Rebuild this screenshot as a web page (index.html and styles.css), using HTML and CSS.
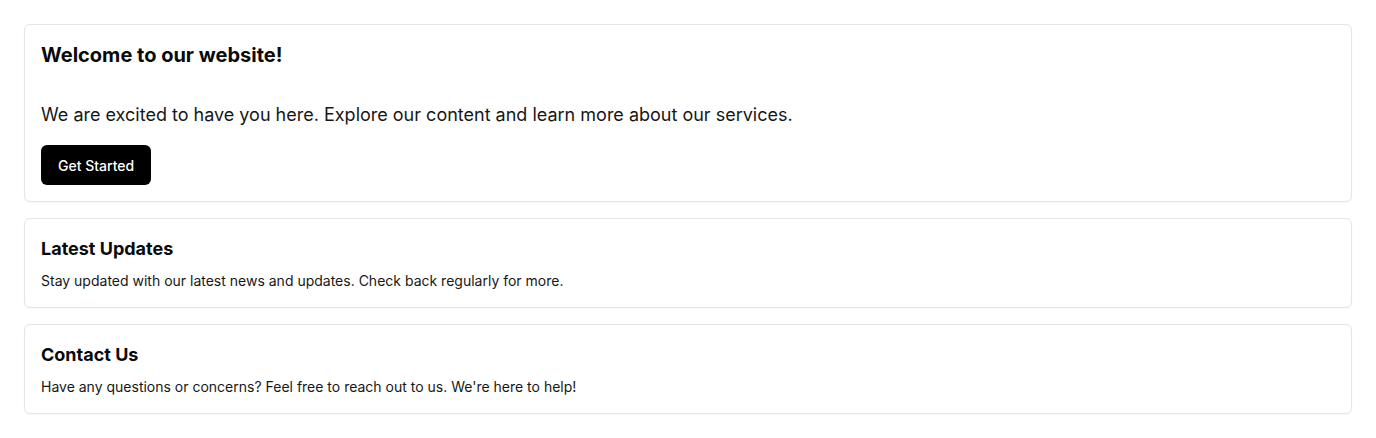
FILE: index.html
```html
<!DOCTYPE html>
<html lang="en">
<head>
<meta charset="utf-8">
<title>Welcome</title>
<link rel="stylesheet" href="styles.css">
</head>
<body>
<main class="page">
  <section class="card">
    <h1 class="card-title-lg">Welcome to our website!</h1>
    <p class="lead">We are excited to have you here. Explore our content and learn more about our services.</p>
    <button class="btn">Get Started</button>
  </section>
  <section class="card">
    <h2 class="card-title">Latest Updates</h2>
    <p class="text">Stay updated with our latest news and updates. Check back regularly for more.</p>
  </section>
  <section class="card">
    <h2 class="card-title">Contact Us</h2>
    <p class="text">Have any questions or concerns? Feel free to reach out to us. We're here to help!</p>
  </section>
</main>
</body>
</html>
```

FILE: styles.css
```css
* { box-sizing: border-box; }
html, body { margin: 0; padding: 0; background: #ffffff; }
body {
  font-family: Inter, "Noto Sans", sans-serif;
  color: #0a0a0a;
}
.page {
  padding: 24px;
  display: flex;
  flex-direction: column;
  gap: 16px;
}
.card {
  border: 1px solid #e5e5e5;
  border-radius: 6px;
  padding: 16px;
  background: #fff;
  box-shadow: 0 1px 2px rgba(0,0,0,0.04);
}
.card-title-lg {
  margin: 0 0 32px;
  font-size: 20px;
  line-height: 28px;
  font-weight: 700;
}
.lead {
  margin: 0 0 16px;
  font-size: 18px;
  line-height: 28px;
  color: #171717;
}
.btn {
  display: block;
  height: 40px;
  padding: 0 17px;
  border: 0;
  border-radius: 6px;
  background: #000;
  color: #fff;
  font-family: Inter, "Noto Sans", sans-serif;
  font-size: 14px;
  font-weight: 500;
}
.card-title {
  margin: 0 0 8px;
  font-size: 18px;
  line-height: 28px;
  font-weight: 700;
}
.text {
  margin: 0;
  font-size: 14px;
  line-height: 20px;
  color: #171717;
}
```
